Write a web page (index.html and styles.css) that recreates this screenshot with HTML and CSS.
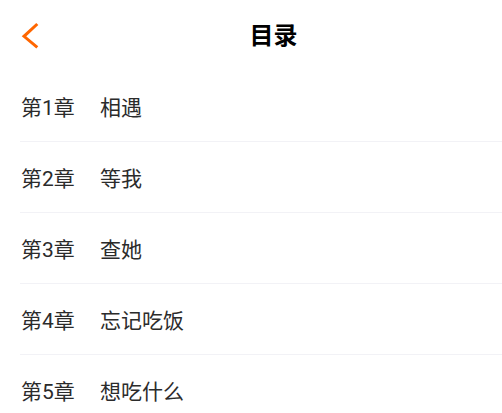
FILE: index.html
```html
<!DOCTYPE html>
<html lang="zh-CN">
<head>
<meta charset="utf-8">
<title>目录</title>
<link rel="stylesheet" href="styles.css">
</head>
<body>
<div class="page">
  <header class="header">
    <div class="back">
      <svg class="back-icon" width="20" height="30" viewBox="0 0 20 30">
        <polyline points="17.3,3 4,15.3 17.3,26.3" fill="none" stroke="#ff6600" stroke-width="3" stroke-linecap="butt" stroke-linejoin="miter"/>
      </svg>
    </div>
    <h1 class="title">目录</h1>
  </header>
  <ul class="chapters">
    <li class="chapter"><span class="num">第1章</span><span class="name">相遇</span></li>
    <li class="chapter"><span class="num">第2章</span><span class="name">等我</span></li>
    <li class="chapter"><span class="num">第3章</span><span class="name">查她</span></li>
    <li class="chapter"><span class="num">第4章</span><span class="name">忘记吃饭</span></li>
    <li class="chapter"><span class="num">第5章</span><span class="name">想吃什么</span></li>
  </ul>
</div>
</body>
</html>
```

FILE: styles.css
```css
html, body {
  margin: 0;
  padding: 0;
  background: #ffffff;
  overflow: hidden;
}
body {
  font-family: Roboto, "Noto Sans CJK SC", sans-serif;
  color: #2b2b2b;
}
.page {
  width: 502px;
}
.header {
  display: flex;
  align-items: center;
  height: 71px;
}
.back {
  width: 60px;
  padding-left: 20px;
  box-sizing: border-box;
  display: flex;
  align-items: center;
}
.back-icon {
  display: block;
}
.title {
  flex: 1;
  margin: 0;
  padding-right: 15px;
  text-align: center;
  font-size: 24px;
  font-weight: bold;
  color: #000000;
  line-height: 30px;
}
.chapters {
  list-style: none;
  margin: 0;
  padding: 0 0 0 20px;
}
.chapter {
  display: flex;
  align-items: center;
  height: 70px;
  border-bottom: 1px solid #f2f2f6;
  font-size: 21px;
  padding-left: 1px;
}
.num {
  width: 79px;
}
```
